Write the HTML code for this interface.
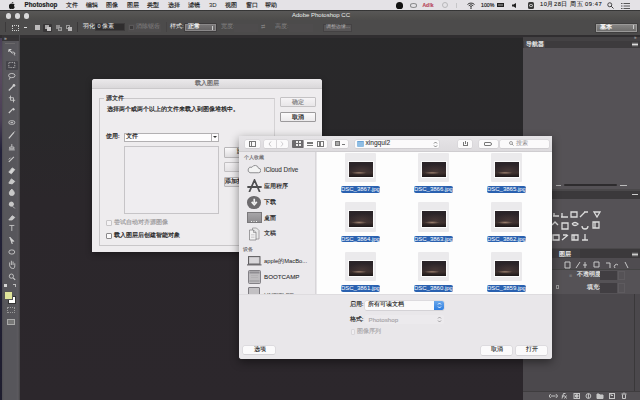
<!DOCTYPE html>
<html><head><meta charset="utf-8">
<style>
*{margin:0;padding:0;box-sizing:border-box}
html,body{width:640px;height:400px;overflow:hidden;background:linear-gradient(#29292a 0,#29282a 120px,#2b272b 200px,#2c272c 400px);font-family:"Liberation Sans",sans-serif;position:relative}
.a{position:absolute}
.t{position:absolute;white-space:nowrap;line-height:1}
#menubar{left:0;top:0;width:640px;height:10px;background:#e4e2e6;color:#1a1a1a;font-size:6px}
#menubar .t{top:2px}
#titlebar{left:0;top:10px;width:640px;height:10px;background:linear-gradient(#2e2e2e 0,#3a3a3a 0.8px,#585756 1.5px,#52514f 6px,#4d4c4b 10px)}
#opts{left:0;top:20px;width:640px;height:15px;background:#4c4b4b;color:#d8d8d8;font-size:5.5px}
#strip{left:0;top:35px;width:640px;height:2.5px;background:#302e30}
#tools{left:2px;top:35px;width:17.5px;height:365px;background:linear-gradient(90deg,#4e4d52 0,#57565b 2px,#57565b 14px,#5c5a5f 16px,#4a494c 17.5px)}
#rpanel{left:523px;top:37px;width:117px;height:363px;background:#555256}
.fb{background:#fbfafb;border-radius:1.5px;box-shadow:0 0 0 0.5px #d2d0d3,0 0.5px 0.5px rgba(0,0,0,.15)}
.th{width:31.3px;height:29.5px;background:#ebeaec;border-radius:1px}
.im{position:absolute;left:3px;top:8px;width:25.5px;height:17.4px;background:#fbfbfb;padding:1px}
.im::after{content:"";position:absolute;left:1px;top:1px;right:1px;bottom:1px;background:radial-gradient(ellipse 32% 9% at 42% 72%,rgba(170,140,120,.85),transparent),radial-gradient(ellipse 60% 40% at 55% 55%,rgba(90,70,65,.5),transparent),linear-gradient(#2a2428,#2e2629 55%,#3a2e2c 72%,#1c1718)}
.lb{width:39.2px;height:6.6px;background:#2a61b0;border-radius:2px;color:#fff;font-size:6px;line-height:6.6px;text-align:center;white-space:nowrap}
.sk .t{-webkit-text-stroke:0.2px currentColor}
#menubar.sk .t{-webkit-text-stroke:0.15px currentColor}
.sk.fk .t{-webkit-text-stroke:0.15px currentColor}
.light{width:5.4px;height:5.4px;border-radius:50%;background:#d9d9d9;top:13.3px}
</style></head><body>
<!-- left desktop strip -->
<div class="a" style="left:0;top:10px;width:2.5px;height:390px;background:linear-gradient(#3a3850 0,#5a4a60 60px,#4a3f55 110px,#23223a 140px,#1e1d2e 400px)"></div>

<div id="menubar" class="a sk">
  <svg class="a" style="left:9px;top:1.5px" width="6" height="7" viewBox="0 0 12 14"><path d="M8.5 0c.1 1-.3 2-1 2.7-.7.7-1.6 1.1-2.5 1 0-1 .4-2 1-2.6C6.7.4 7.7 0 8.5 0zM11.6 10c-.3.8-.6 1.4-1.1 2.1-.7 1-1.4 1.9-2.5 1.9-1 0-1.3-.6-2.5-.6s-1.6.6-2.5.6C1.9 14 1.2 12.900.5 11.9-1 9.600-.9 5.600 1.600 4.300 2.400 3.800 3.300 3.500 4.100 3.500c1 0 1.700.6 2.500.6.800 0 1.400-.6 2.500-.6.800 0 1.800.4 2.400 1.200-2.100 1.200-1.800 4.300.1 5.300z" fill="#1a1a1a"/></svg>
  <span class="t" style="left:24.5px;font-weight:bold;font-size:6.3px">Photoshop</span>
  <span class="t" style="left:65.6px">文件</span>
  <span class="t" style="left:86px">编辑</span>
  <span class="t" style="left:106px">图像</span>
  <span class="t" style="left:127px">图层</span>
  <span class="t" style="left:147px">类型</span>
  <span class="t" style="left:168px">选择</span>
  <span class="t" style="left:188.4px">滤镜</span>
  <span class="t" style="left:209px;-webkit-text-stroke:0">3D</span>
  <span class="t" style="left:225px">视图</span>
  <span class="t" style="left:245.6px">窗口</span>
  <span class="t" style="left:265.3px">帮助</span>
  <!-- status icons -->
  <div class="a" style="left:396px;top:2px;width:7px;height:7px;border-radius:50% 50% 40% 40%;background:#111"></div>
  <div class="a" style="left:410px;top:3px;width:7px;height:4.5px;border-radius:50%;border:1px solid #8a8a8c"></div>
  <span class="t" style="left:422.5px;top:2.5px;color:#b8485a;font-size:5px;font-weight:bold">Ad!k</span>
  <div class="a" style="left:442px;top:2px;width:6px;height:6px;border-radius:50%;border:1px solid #b8b8ba"></div>
  <div class="a" style="left:456px;top:3px;width:1px;height:5px;background:#c6c6c8"></div>
  <svg class="a" style="left:467px;top:1.5px" width="8" height="7" viewBox="0 0 16 14"><path d="M1 5a10 10 0 0 1 14 0M3.5 7.5a6.5 6.5 0 0 1 9 0M6 10a3 3 0 0 1 4 0" stroke="#222" stroke-width="1.8" fill="none"/><circle cx="8" cy="12.5" r="1.3" fill="#222"/></svg>
  <span class="t" style="left:481px;top:2.5px;font-size:5.2px">100%</span>
  <div class="a" style="left:497px;top:2.8px;width:7px;height:4.5px;border:1px solid #222;background:#666"></div>
  <svg class="a" style="left:512px;top:2.5px" width="5" height="5" viewBox="0 0 10 10"><path d="M0 3h3l5-3v10l-5-3H0z" fill="#222"/></svg>
  <div class="a" style="left:527.5px;top:2px;width:6.5px;height:6.5px;border-radius:1.5px;background:#3a3a3a"></div><div class="a" style="left:529px;top:3.5px;width:3.5px;height:3.5px;border-radius:50%;border:0.8px solid #ddd"></div>
  <span class="t" style="left:540px;top:2px;font-size:5.8px;letter-spacing:0.5px;-webkit-text-stroke:0.1px">10月28日 周五 09:47</span>
  <svg class="a" style="left:607px;top:2px" width="7" height="7" viewBox="0 0 14 14"><circle cx="5.5" cy="5.5" r="4" stroke="#222" stroke-width="1.6" fill="none"/><path d="M8.5 8.5l4.5 4.5" stroke="#222" stroke-width="1.8"/></svg>
  <svg class="a" style="left:621px;top:2.5px" width="9" height="6" viewBox="0 0 18 12"><path d="M0 1h3M5 1h13M0 6h3M5 6h13M0 11h3M5 11h13" stroke="#333" stroke-width="1.6"/></svg>
</div>

<div id="titlebar" class="a">
  <div class="a light" style="left:5.6px;top:3.3px"></div>
  <div class="a light" style="left:14.7px;top:3.3px"></div>
  <div class="a light" style="left:23.5px;top:3.3px"></div>
  <span class="t" style="left:292px;top:2.4px;font-size:6px;color:#ececec">Adobe Photoshop CC</span>
</div>

<div id="opts" class="a">
  <div class="a" style="left:5px;top:2px;width:1px;height:10px;background:#3c3a3b"></div>
  <div class="a" style="left:12px;top:4.5px;width:6.5px;height:6.5px;border:1px dotted #cfcfcf"></div>
  <div class="a" style="left:23.5px;top:7px;width:3px;height:1px;background:#ddd"></div>
  <div class="a" style="left:35px;top:5px;width:5px;height:5px;background:#bdbbbc"></div>
  <div class="a" style="left:43px;top:3.5px;width:8.5px;height:8px;background:#383637;border-radius:1px"></div>
  <div class="a" style="left:44.5px;top:5px;width:4px;height:4px;background:#a9a7a8"></div>
  <div class="a" style="left:46.5px;top:6.5px;width:4px;height:4px;background:#c9c7c8"></div>
  <div class="a" style="left:56px;top:5px;width:4px;height:4px;background:#8d8b8c"></div>
  <div class="a" style="left:58px;top:7px;width:4px;height:4px;background:#6d6b6c;border:1px solid #999"></div>
  <div class="a" style="left:66px;top:5px;width:4px;height:4px;border:1px solid #999"></div>
  <div class="a" style="left:68px;top:7px;width:4px;height:4px;background:#b9b7b8"></div>
  <div class="a" style="left:77px;top:2px;width:1px;height:10px;background:#3a3839"></div>
  <span class="t" style="left:82.5px;top:4.3px;color:#f0f0f0">羽化:</span>
  <div class="a" style="left:94.5px;top:3px;width:30px;height:8px;background:#2f2d2e;border:1px solid #3d3b3c"></div>
  <span class="t" style="left:97.5px;top:4.3px;color:#e8e8e8">0 像素</span>
  <div class="a" style="left:127.5px;top:3.5px;width:33px;height:8px;background:#4f4d4e"></div><div class="a" style="left:128.5px;top:4.8px;width:5px;height:5px;background:#3c3a3b;border:1px solid #5a5859"></div>
  <span class="t" style="left:136px;top:4.3px;color:#858384">消除锯齿</span>
  <div class="a" style="left:165.5px;top:2px;width:1px;height:10px;background:#454344"></div>
  <span class="t" style="left:170px;top:4.3px;color:#f0f0f0">样式:</span>
  <div class="a" style="left:184.7px;top:3.7px;width:31.8px;height:7.6px;background:linear-gradient(#767475,#666465);border:1px solid #8a8889;box-shadow:0 0 0 0.5px #2f2d2e"></div>
  <span class="t" style="left:188px;top:4.3px;color:#f4f4f4;-webkit-text-stroke:0.2px #f4f4f4">正常</span>
  <div class="a" style="left:212px;top:5.5px;width:1px;height:4px;background:#ccc"></div>
  <span class="t" style="left:221px;top:4.3px;color:#858384">宽度:</span>
  <div class="a" style="left:234px;top:3.5px;width:24px;height:8px;background:#4e4c4d"></div>
  <span class="t" style="left:261px;top:4px;color:#7d7b7c;font-size:5px">⇄</span>
  <span class="t" style="left:275px;top:4.3px;color:#858384">高度:</span>
  <div class="a" style="left:289px;top:3.5px;width:24px;height:8px;background:#4e4c4d"></div>
  <div class="a" style="left:322.5px;top:3.5px;width:29px;height:8px;background:#585657;border:1px solid #444243"></div>
  <span class="t" style="left:325.5px;top:4.3px;color:#b0aeaf;font-size:5.3px">调整边缘...</span>
  <div class="a" style="left:596px;top:3.7px;width:41px;height:8px;background:linear-gradient(#858483,#6e6d6c);border:1px solid #9a9998;box-shadow:0 0 0 0.5px #333"></div>
  <span class="t" style="left:599.5px;top:4.5px;color:#fff;-webkit-text-stroke:0.2px #fff">基本</span>
  <div class="a" style="left:633px;top:5px;width:1px;height:4px;background:#ccc"></div>
</div>
<div id="strip" class="a"></div>
<div id="tools" class="a">
  <div class="a" style="left:0;top:0;width:17px;height:6px;background:#363436"></div>
  <span class="t" style="left:2px;top:0.5px;font-size:5px;color:#d0d0d0">»</span>
  <div class="a" style="left:3px;top:7.5px;width:10px;height:1px;background:#6a686a"></div>
  <div class="a" style="left:3.8px;top:26px;width:12px;height:9px;background:#45444a;border-radius:1px"></div>
  <svg class="a" style="left:0;top:12px" width="17" height="300" viewBox="0 0 17 300" fill="none" stroke="#cfcfcf" stroke-width="1">
    <g transform="translate(9.8,5.5) scale(0.85)"><path d="M-3.5-3.5l4.5 4.5M-3.5-3.5v3M-3.5-3.5h3" stroke-width="1.2"/><path d="M1-1l3 2-1.5 0.5 1 2" stroke-width="1"/></g>
    <g transform="translate(9.8,18) scale(0.85)"><rect x="-3.5" y="-3" width="7" height="6" stroke-dasharray="1 1"/></g>
    <g transform="translate(9.8,29) scale(0.85)"><ellipse cx="0" cy="-0.5" rx="3.8" ry="2.5"/><path d="M-2 1.8l-1 2.5"/></g>
    <g transform="translate(9.8,40.5) scale(0.85)"><path d="M-3.5 3.5l5-5" stroke-width="1.4"/><circle cx="2.5" cy="-2.5" r="1.2" fill="#d6d6d6"/></g>
    <g transform="translate(9.8,52) scale(0.85)"><path d="M-1.5-4v5.5h5.5M-3.5-1.5h5.5v5.5"/></g>
    <g transform="translate(9.8,63) scale(0.85)"><path d="M-3.5 3.5l4.5-4.5" stroke-width="1.4"/><path d="M1-2l2 2" stroke-width="2.2"/></g>
    <g transform="translate(9.8,75.5) scale(0.85)"><rect x="-3.5" y="-2" width="7" height="4" rx="2"/><path d="M-1.5 0h3"/></g>
    <g transform="translate(9.8,88) scale(0.85)"><path d="M-3.5 4l6-7" stroke-width="1.4"/><path d="M2.5-3l1-1.2"/></g>
    <g transform="translate(9.8,100.5) scale(0.85)"><path d="M0-4v3.5M-2.5-0.5h5v2h-5zM-3.5 2.8h7" /></g>
    <g transform="translate(9.8,112) scale(0.85)"><path d="M-3.5 3.5l6-6" stroke-width="1.2"/><path d="M-3.5 0.5l2-2"/></g>
    <g transform="translate(9.8,123) scale(0.85)"><path d="M-3.5 2.5l4-5 3 2-4 5z" fill="#d6d6d6"/></g>
    <g transform="translate(9.8,134) scale(0.85)"><path d="M-3.5 2.5l3-5 4 3-3 3z" fill="#c8c8c8"/></g>
    <g transform="translate(9.8,145.5) scale(0.85)"><path d="M0-4q-3 3-3 4.5a3 3 0 0 0 6 0q0-1.5-3-4.5z" fill="#c8c8c8"/></g>
    <g transform="translate(9.8,158) scale(0.85)"><circle cx="-0.5" cy="-1" r="2.5" fill="#c8c8c8"/><path d="M1 1.5l2.5 2.5"/></g>
    <g transform="translate(9.8,170) scale(0.85)"><path d="M-3.5 3.5l4-5 3 2-3 3z" fill="#c8c8c8"/></g>
    <g transform="translate(9.8,181) scale(0.85)"><path d="M-3-3h6M0-3v6.5"/></g>
    <g transform="translate(9.8,193) scale(0.85)"><path d="M-2.5-3.5l5 5h-3l1 3z" fill="#d6d6d6"/></g>
    <g transform="translate(9.8,205) scale(0.85)"><ellipse cx="0" cy="0" rx="3.5" ry="2.5"/></g>
    <g transform="translate(9.8,218) scale(0.85)"><path d="M-2.5 1v-4M-0.5 0v-5M1.5 0v-4M3.5 1v-3M-2.5 1q1 3 3 3h2q1-1 1-3"/></g>
    <g transform="translate(9.8,230) scale(0.85)"><circle cx="-0.5" cy="-1" r="2.5"/><path d="M1.5 1l2.5 2.5" stroke-width="1.3"/></g>
  </svg>
  <div class="a" style="left:1.5px;top:249px;width:3px;height:3px;background:#d6d6d6"></div>
  <div class="a" style="left:11px;top:249px;width:3px;height:3px;border-top:1px solid #bbb;border-right:1px solid #bbb"></div>
  <div class="a" style="left:6px;top:261px;width:8px;height:8px;background:#fff;border:1px solid #333"></div>
  <div class="a" style="left:2px;top:256px;width:8.5px;height:8.5px;background:#dfe39a;border:1px solid #555"></div>
  <div class="a" style="left:5px;top:272px;width:8px;height:6px;border:1px dotted #999"></div>
  <div class="a" style="left:5px;top:284px;width:8px;height:6px;border:1px solid #aaa;background:#777"></div>
</div>
<div id="rpanel" class="a">
  <div class="a" style="left:0;top:0;width:117px;height:3.5px;background:#444244"></div>
  <span class="t" style="left:111px;top:-1px;font-size:4.5px;color:#bbb">»</span>
  <!-- navigator header -->
  <div class="a" style="left:0;top:3.5px;width:117px;height:7px;background:#3d3b3d"></div>
  <div class="a" style="left:1px;top:3.5px;width:21px;height:7px;background:#48464a"></div>
  <span class="t" style="left:3px;top:4.5px;font-size:5.5px;color:#f0f0f0;-webkit-text-stroke:0.2px #f0f0f0">导航器</span>
  <div class="a" style="left:109px;top:6.5px;width:6px;height:1px;background:#ddd;box-shadow:0 -1.2px 0 #999,0 1.2px 0 #999"></div>
  <!-- navigator slider -->
  <div class="a" style="left:33px;top:145.8px;width:5px;height:3px;border-bottom:1px solid #aaa"></div>
  <div class="a" style="left:41px;top:147px;width:53px;height:2px;background:#2e2c2e;border-radius:1px"></div>
  <div class="a" style="left:97px;top:145px;width:7px;height:4px;border-bottom:1.5px solid #bbb"></div>
  <div class="a" style="left:108px;top:143px;width:6px;height:6px;color:#999;font-size:5px"></div>
  <!-- adjustments header -->
  <div class="a" style="left:0;top:152px;width:117px;height:1.5px;background:#4a484a"></div>
  <div class="a" style="left:0;top:153.5px;width:117px;height:8px;background:#3b393b"></div>
  <div class="a" style="left:109px;top:157px;width:6px;height:1px;background:#ccc"></div>
  <!-- adjustments icons -->
  <svg class="a" style="left:26px;top:174px" width="80" height="35" viewBox="0 0 80 35" fill="none" stroke="#dcdcdc" stroke-width="1.3">
    <path d="M4 5h6M5 2v3M12 6h7M13 2v4M22 1h6v5h-6zM31 6l5-5M35 1h4M45 1l3 5 3-5z"/>
    <path d="M3 14l3-3 3 3M13 12h6v6h-6zM23 13q3-3 6 0q-3 3-6 0M33 15a3 3 0 1 0 6 0M44 11h6v6h-6zM46 11v6"/>
    <path d="M4 24h6v5H4zM13 29l6-5M14 24h4M23 24h6v5h-6zM25 24v5M33 29h6M36 23v6"/>
  </svg>
  <!-- layers header -->
  <div class="a" style="left:0;top:211px;width:117px;height:1.5px;background:#4a484a"></div>
  <div class="a" style="left:0;top:212.2px;width:117px;height:9px;background:#3b393b"></div>
  <div class="a" style="left:29px;top:212.2px;width:28px;height:9px;background:#403e41"></div>
  <span class="t" style="left:36px;top:214.5px;font-size:5.5px;color:#f0f0f0;-webkit-text-stroke:0.2px #f0f0f0">图层</span>
  <div class="a" style="left:109px;top:216.5px;width:6px;height:1px;background:#ccc;box-shadow:0 -1.2px 0 #999,0 1.2px 0 #999"></div>
  <!-- filter row -->
  <div class="a" style="left:0;top:221.2px;width:117px;height:12px;background:#4f4c50;border-bottom:1px solid #444"></div>
  <svg class="a" style="left:40px;top:223.5px" width="70" height="8" viewBox="0 0 70 8" fill="none" stroke="#c8c8c8" stroke-width="1">
    <path d="M2 1h5v6H2zM13 7l4-6M22 1v6M20 4h4M31 1h5v5h-5zM43 2h4v5M52 7a2 2 0 1 1 3-3M62 1l3 6"/>
  </svg>
  <!-- opacity -->
  <span class="t" style="left:46px;top:235.5px;font-size:5.3px;color:#888">≡</span>
  <span class="t" style="left:53.7px;top:235.2px;font-size:5.5px;color:#e0e0e0;-webkit-text-stroke:0.2px #e0e0e0">不透明度:</span>
  <div class="a" style="left:77px;top:233.5px;width:17px;height:9.5px;background:#413e42"></div>
  <div class="a" style="left:94.5px;top:233.5px;width:7px;height:9.5px;border:1px solid #5e5b5f"></div>
  <span class="t" style="left:64px;top:247.8px;font-size:5.5px;color:#e0e0e0;-webkit-text-stroke:0.2px #e0e0e0">填充:</span>
  <div class="a" style="left:77px;top:246px;width:17px;height:9.5px;background:#413e42"></div>
  <div class="a" style="left:94.5px;top:246px;width:7px;height:9.5px;border:1px solid #5e5b5f"></div>
  <div class="a" style="left:33px;top:248px;width:3px;height:4px;border:1px solid #999"></div>
  <!-- layers list -->
  <div class="a" style="left:0;top:257px;width:117px;height:96.5px;background:#4b484c"></div>
  <div class="a" style="left:110.5px;top:257px;width:1px;height:96.5px;background:#3a383a"></div>
  <!-- bottom bar -->
  <div class="a" style="left:0;top:353.5px;width:117px;height:9.5px;background:#535054;border-top:1px solid #3f3d3f"></div>
  <svg class="a" style="left:26px;top:355px" width="82" height="8" viewBox="0 0 82 8" fill="none" stroke="#c6c6c6" stroke-width="1">
    <path d="M2 4h4.5M1.8 2.5a1.5 1.5 0 0 0 0 3M6.8 2.5a1.5 1.5 0 0 1 0 3"/>
    <path d="M13 6.5l1.5-5h2M12.8 4h2.5M15.5 3.5l2 3M17.5 3.5l-2 3"/>
    <rect x="25" y="1.5" width="5.5" height="5"/><circle cx="27.75" cy="4" r="1.4" fill="#c6c6c6"/>
    <circle cx="39.4" cy="4" r="2.4"/><path d="M39.4 1.6v4.8" />
    <path d="M48 2h2l0.8 1h3.2v3.5h-6z" fill="#c6c6c6"/>
    <rect x="60.5" y="1.5" width="5" height="5"/><path d="M62 1.5v2h2" />
    <path d="M72.5 2h5M73.5 2.5v4h3v-4M74.5 1h1"/>
  </svg>
</div>

<!-- PS dialog -->
<div class="a sk" style="left:92px;top:79px;width:230px;height:173px;background:#eeecee;border-radius:3px 3px 0 0;font-size:5.7px;color:#1a1a1a;box-shadow:0 2px 6px rgba(0,0,0,.35)">
  <div class="a" style="left:0;top:0;width:230px;height:9.5px;background:linear-gradient(#ebe9eb,#dad8da);border-bottom:1px solid #cbc9cb;border-radius:3px 3px 0 0"></div>
  <span class="t" style="left:103px;top:2px;color:#6a686a">载入图层</span>
  <!-- group box -->
  <div class="a" style="left:6.5px;top:18.5px;width:176px;height:148px;border:1px solid #c9c7c9;border-right-color:#d4d2d4"></div>
  <div class="a" style="left:12px;top:16px;width:20px;height:5px;background:#eeecee"></div>
  <span class="t" style="left:14px;top:16.5px">源文件</span>
  <span class="t" style="left:14.5px;top:27.5px;font-size:5.6px">选择两个或两个以上的文件来载入到图像堆栈中。</span>
  <span class="t" style="left:14px;top:55px">使用:</span>
  <div class="a" style="left:32px;top:53.5px;width:95px;height:9px;background:#fdfcfd;border:1px solid #b2b0b2"></div>
  <span class="t" style="left:34px;top:55px">文件</span>
  <div class="a" style="left:118.5px;top:53.5px;width:1px;height:9px;background:#b2b0b2"></div>
  <div class="a" style="left:121px;top:57px;width:0;height:0;border-left:2px solid transparent;border-right:2px solid transparent;border-top:2px solid #333"></div>
  <div class="a" style="left:32px;top:67px;width:95px;height:68px;background:#efedf0;border:1px solid #c6c4c7"></div>
  <div class="a" style="left:131.5px;top:68px;width:20px;height:10.5px;background:linear-gradient(#fbfafb,#dedcde);border:1px solid #b8b6b8;border-radius:1px"></div>
  <span class="t" style="left:145px;top:70.3px">浏览...</span>
  <div class="a" style="left:131.5px;top:82.7px;width:20px;height:10.5px;background:linear-gradient(#f2f0f2,#e4e2e4);border:1px solid #c2c0c2;border-radius:1px"></div>
  <div class="a" style="left:131.5px;top:97.6px;width:20px;height:10.5px;background:linear-gradient(#fbfafb,#dedcde);border:1px solid #b8b6b8;border-radius:1px"></div>
  <span class="t" style="left:132.5px;top:100px">添加打开的文件</span>
  <div class="a" style="left:14.3px;top:141.3px;width:6px;height:6px;background:#f4f2f4;border:1px solid #c8c6c8;border-radius:1px"></div>
  <span class="t" style="left:21.8px;top:141.3px;color:#9c9a9c">尝试自动对齐源图像</span>
  <div class="a" style="left:14.3px;top:153.9px;width:6px;height:6.5px;background:#fbfafb;border:1px solid #8a888a;border-radius:1px"></div>
  <span class="t" style="left:21.8px;top:154.3px">载入图层后创建智能对象</span>
  <!-- buttons -->
  <div class="a" style="left:188px;top:18.3px;width:35.5px;height:10px;background:linear-gradient(#f6f4f6,#e8e6e8);border:1px solid #c4c2c4;border-radius:1px"></div>
  <span class="t" style="left:200px;top:20.5px;color:#8a888a">确定</span>
  <div class="a" style="left:188px;top:33.3px;width:35.5px;height:10px;background:linear-gradient(#fbfafb,#eceaec);border:1px solid #9c9a9c;border-radius:1px"></div>
  <span class="t" style="left:200px;top:35.5px">取消</span>
</div>

<!-- Finder dialog -->
<div class="a sk fk" style="left:239px;top:135.5px;width:313px;height:223px;background:#e8e6e9;border-radius:0 0 3px 3px;box-shadow:0 3px 10px rgba(0,0,0,.45);overflow:hidden;font-size:5.8px;color:#1a1a1a">
  <!-- toolbar -->
  <div class="a" style="left:0;top:0;width:313px;height:16.5px;background:linear-gradient(#e6e4e7,#dddbde);border-bottom:1px solid #cfcdd0"></div>
  <div class="a fb" style="left:5.5px;top:4.3px;width:15.5px;height:7.8px"></div>
  <div class="a" style="left:9.5px;top:5.5px;width:7px;height:5.5px;border:1px solid #777;border-top-width:1.5px"></div><div class="a" style="left:11.5px;top:6px;width:1px;height:4.5px;background:#777"></div>
  <div class="a fb" style="left:25px;top:4.3px;width:24.3px;height:7.8px"></div>
  <div class="a" style="left:37px;top:4.5px;width:1px;height:7.5px;background:#d8d6d9"></div>
  <svg class="a" style="left:29px;top:5.5px" width="4" height="6" viewBox="0 0 8 12"><path d="M6 1L2 6l4 5" stroke="#b5b3b6" stroke-width="1.6" fill="none"/></svg>
  <svg class="a" style="left:41px;top:5.5px" width="4" height="6" viewBox="0 0 8 12"><path d="M2 1l4 5-4 5" stroke="#c5c3c6" stroke-width="1.6" fill="none"/></svg>
  <div class="a" style="left:53.2px;top:4px;width:11.8px;height:8.5px;background:#6c6a6d;border-radius:1px"></div>
  <div class="a" style="left:56.5px;top:5.8px;width:2px;height:2px;background:#eee;box-shadow:3px 0 0 #eee,0 3px 0 #eee,3px 3px 0 #eee"></div>
  <div class="a fb" style="left:65px;top:4.3px;width:23px;height:7.8px;border-radius:0 1.5px 1.5px 0"></div>
  <div class="a" style="left:67.5px;top:6px;width:6px;height:4px;border-top:1px solid #777;border-bottom:1px solid #777;background:linear-gradient(#777,#777) center/100% 1px no-repeat"></div>
  <div class="a" style="left:78px;top:5.5px;width:7px;height:5.5px;border:0.8px solid #777"></div>
  <div class="a" style="left:80.3px;top:6px;width:2.2px;height:4.5px;border-left:0.8px solid #777;border-right:0.8px solid #777"></div>
  <div class="a fb" style="left:93px;top:4.3px;width:15.5px;height:7.8px"></div>
  <div class="a" style="left:95.5px;top:5.5px;width:5px;height:5px;border:1px solid #777;background:#aaa"></div>
  <div class="a" style="left:102.5px;top:8px;width:3px;height:1px;background:#777"></div>
  <div class="a fb" style="left:115.5px;top:4.3px;width:84.5px;height:7.8px"></div>
  <div class="a" style="left:117.5px;top:5.2px;width:7px;height:6px;background:#8fbde3;border-radius:1px;border-top:1px solid #6aa3d6"></div>
  <span class="t" style="left:126.5px;top:4.6px;color:#3a3a3a;font-size:6.6px;-webkit-text-stroke:0.1px">xingqui2</span>
  <svg class="a" style="left:193.5px;top:5px" width="5" height="7" viewBox="0 0 10 14"><path d="M2 5l3-3 3 3M2 9l3 3 3-3" stroke="#666" stroke-width="1.6" fill="none"/></svg>
  <div class="a fb" style="left:218.7px;top:4.3px;width:14.5px;height:7.8px"></div>
  <div class="a" style="left:223.5px;top:6.5px;width:5px;height:4px;border:1px solid #777;border-top:none"></div>
  <div class="a" style="left:225.5px;top:5px;width:1px;height:3.5px;background:#777"></div>
  <div class="a fb" style="left:240px;top:4.3px;width:18.5px;height:7.8px"></div>
  <div class="a" style="left:244.5px;top:6.3px;width:8px;height:4px;border:1px solid #777;border-radius:1px 2px 2px 1px"></div>
  <div class="a fb" style="left:261px;top:4.3px;width:49px;height:7.8px"></div>
  <svg class="a" style="left:270px;top:5.5px" width="5" height="5" viewBox="0 0 10 10"><circle cx="4" cy="4" r="3" stroke="#777" stroke-width="1.4" fill="none"/><path d="M6 6l3 3" stroke="#777" stroke-width="1.5"/></svg>
  <span class="t" style="left:276.5px;top:5px;color:#8a888b;-webkit-text-stroke:0">搜索</span>

  <!-- sidebar -->
  <div class="a" style="left:0;top:16.5px;width:76.5px;height:142px;background:#ebe9ec;border-right:1px solid #d7d5d8"></div>
  <span class="t" style="left:4.5px;top:19.5px;color:#6d6b6e;font-size:5.2px">个人收藏</span>
  <svg class="a" style="left:8px;top:28.8px" width="14" height="9.5" viewBox="0 0 28 19"><path d="M6 17.5h17a4.5 4.5 0 0 0 0-9 7 7 0 0 0-13-2 5 5 0 0 0-4 11z" fill="#f3f3f3" stroke="#8e8e90" stroke-width="2"/></svg>
  <span class="t" style="left:25px;top:31.5px;color:#3a3a3a;font-size:6.3px;-webkit-text-stroke:0.1px">iCloud Drive</span>
  <svg class="a" style="left:7.5px;top:43px" width="15" height="13.5" viewBox="0 0 30 27"><path d="M15 2L5 25M15 2l10 23M2 16h26" stroke="#4e4e50" stroke-width="3.6" fill="none" stroke-linecap="round"/></svg>
  <span class="t" style="left:24.6px;top:48.3px">应用程序</span>
  <div class="a" style="left:8px;top:60.5px;width:13.5px;height:12.6px;border-radius:50%;background:#6d6b6e"></div>
  <svg class="a" style="left:10.5px;top:62.5px" width="8.5" height="8.5" viewBox="0 0 10 10"><path d="M5 1v5M2 4.5l3 3.5 3-3.5" stroke="#f0f0f0" stroke-width="2" fill="none"/></svg>
  <span class="t" style="left:24.6px;top:64.3px">下载</span>
  <div class="a" style="left:8.2px;top:76.6px;width:14.8px;height:10.8px;background:linear-gradient(#a6a4a7,#8f8d90);border:0.6px solid #7a787b"></div><div class="a" style="left:12px;top:85px;width:1.2px;height:1.2px;background:#eee;box-shadow:2.5px 0 0 #eee,5px 0 0 #eee"></div>
  <span class="t" style="left:24.6px;top:80.6px">桌面</span>
  <svg class="a" style="left:8.5px;top:91.5px" width="13.5" height="13.5" viewBox="0 0 27 27"><path d="M9 2h8l5 5v17H9z" fill="#e8e8e8" stroke="#8a888b" stroke-width="1.4"/><path d="M3 6h8l5 5v15H3z" fill="#f2f2f2" stroke="#7a787b" stroke-width="1.4"/><path d="M11 6v5h5" fill="none" stroke="#7a787b" stroke-width="1.2"/><path d="M6 15h7M6 18h7M6 21h7" stroke="#b8b6b9" stroke-width="1"/></svg>

  <span class="t" style="left:24.6px;top:95.8px">文稿</span>
  <span class="t" style="left:4px;top:111px;color:#6d6b6e;font-size:5.2px">设备</span>
  <svg class="a" style="left:8px;top:120.5px" width="14.5" height="9.5" viewBox="0 0 29 19"><rect x="3" y="1.2" width="23" height="15" fill="#c9c7ca" stroke="#555356" stroke-width="1.8"/><rect x="5.5" y="3.5" width="18" height="10.5" fill="#d9d7da"/><path d="M0 17.8h29" stroke="#555356" stroke-width="2"/></svg>
  <span class="t" style="left:25px;top:123.5px;-webkit-text-stroke:0">apple的MacBo...</span>
  <svg class="a" style="left:8.5px;top:134.5px" width="13" height="14" viewBox="0 0 26 28"><rect x="1" y="1" width="24" height="26" rx="2" fill="#bdbbbe" stroke="#6e6c71" stroke-width="1.6"/><rect x="3" y="3" width="20" height="4" fill="#8f8d92"/><path d="M3 22h20" stroke="#7e7c81" stroke-width="1.2"/><path d="M6 11h14M6 15h14" stroke="#a8a6ab" stroke-width="1"/></svg>

  <span class="t" style="left:25px;top:138.5px;font-size:6.2px;color:#333;-webkit-text-stroke:0.1px">BOOTCAMP</span>
  <div class="a" style="left:8.5px;top:151px;width:12.5px;height:10px;background:#c2c0c3;border:1px solid #7d7b80;border-radius:1px"></div>
  <span class="t" style="left:25px;top:156px;font-size:6.2px;color:#777">UNTITLED</span>
  <!-- content -->
  <div class="a" style="left:77.5px;top:16.5px;width:235.5px;height:142px;background:#fdfdfd"></div>
  <div class="a th" style="left:106.0px;top:17.2px"><div class="im"></div></div>
  <div class="a lb" style="left:101.8px;top:50.5px">DSC_3867.jpg</div>
  <div class="a th" style="left:179.0px;top:17.2px"><div class="im"></div></div>
  <div class="a lb" style="left:174.8px;top:50.5px">DSC_3866.jpg</div>
  <div class="a th" style="left:252.0px;top:17.2px"><div class="im"></div></div>
  <div class="a lb" style="left:247.8px;top:50.5px">DSC_3865.jpg</div>
  <div class="a th" style="left:106.0px;top:66.8px"><div class="im"></div></div>
  <div class="a lb" style="left:101.8px;top:100.1px">DSC_3864.jpg</div>
  <div class="a th" style="left:179.0px;top:66.8px"><div class="im"></div></div>
  <div class="a lb" style="left:174.8px;top:100.1px">DSC_3863.jpg</div>
  <div class="a th" style="left:252.0px;top:66.8px"><div class="im"></div></div>
  <div class="a lb" style="left:247.8px;top:100.1px">DSC_3862.jpg</div>
  <div class="a th" style="left:106.0px;top:116.4px"><div class="im"></div></div>
  <div class="a lb" style="left:101.8px;top:149.7px">DSC_3861.jpg</div>
  <div class="a th" style="left:179.0px;top:116.4px"><div class="im"></div></div>
  <div class="a lb" style="left:174.8px;top:149.7px">DSC_3860.jpg</div>
  <div class="a th" style="left:252.0px;top:116.4px"><div class="im"></div></div>
  <div class="a lb" style="left:247.8px;top:149.7px">DSC_3859.jpg</div>
  <!-- bottom -->
  <div class="a" style="left:0;top:158.3px;width:313px;height:66px;background:#e9e7ea;border-top:1px solid #dedcdf"></div>
  <span class="t" style="left:110.7px;top:166.5px">启用:</span>
  <div class="a fb" style="left:125.7px;top:165.3px;width:79.7px;height:9.4px"></div>
  <span class="t" style="left:128.5px;top:166.8px">所有可读文档</span>
  <div class="a" style="left:195px;top:165.3px;width:10.4px;height:9.4px;border-radius:0 2px 2px 0;background:linear-gradient(#6aa8ec,#2f7ee0)"></div>
  <svg class="a" style="left:197.5px;top:166.5px" width="5" height="7" viewBox="0 0 10 14"><path d="M2 5l3-3 3 3M2 9l3 3 3-3" stroke="#fff" stroke-width="1.8" fill="none"/></svg>
  <span class="t" style="left:110.7px;top:181px">格式:</span>
  <div class="a" style="left:125.7px;top:179.4px;width:79.7px;height:9.3px;background:#eceaed;border-radius:2px"></div>
  <span class="t" style="left:129.5px;top:181px;color:#a9a7aa;font-size:6.2px">Photoshop</span>
  <svg class="a" style="left:197.5px;top:180.5px" width="5" height="7" viewBox="0 0 10 14"><path d="M2 5l3-3 3 3M2 9l3 3 3-3" stroke="#8a888b" stroke-width="1.6" fill="none"/></svg>
  <div class="a" style="left:111.6px;top:193.5px;width:4.7px;height:5.5px;background:#f0eef1;border:1px solid #d9d7da;border-radius:1px"></div>
  <span class="t" style="left:118.2px;top:193.3px;color:#a9a7aa">图像序列</span>
  <div class="a fb" style="left:4px;top:210px;width:31.6px;height:8.8px"></div>
  <span class="t" style="left:14.5px;top:211.5px;-webkit-text-stroke:0.1px">选项</span>
  <div class="a fb" style="left:242px;top:210px;width:30.5px;height:9.4px"></div>
  <span class="t" style="left:251.5px;top:211.8px;-webkit-text-stroke:0.1px">取消</span>
  <div class="a fb" style="left:277px;top:210px;width:31.4px;height:9.4px"></div>
  <span class="t" style="left:287px;top:211.8px;-webkit-text-stroke:0.1px">打开</span>
</div>
</body></html>
